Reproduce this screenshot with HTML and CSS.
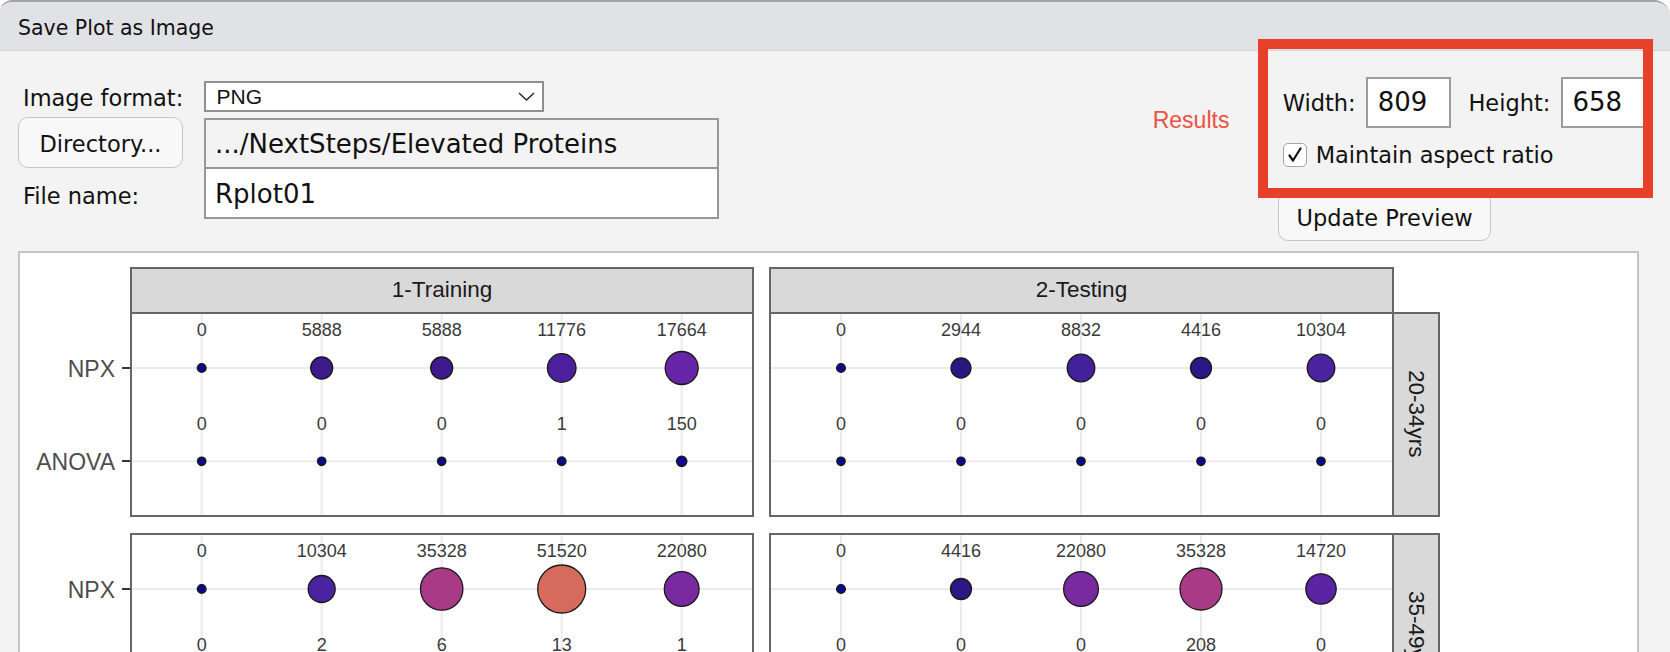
FILE: index.html
```html
<!DOCTYPE html>
<html>
<head>
<meta charset="utf-8">
<title>Save Plot as Image</title>
<link rel="stylesheet" href="styles.css">
</head>
<body>
<div class="window">
  <div class="titlebar">Save Plot as Image</div>
  <div class="content">
    <div class="top">
      <div class="form">
        <div class="frow r1">
          <div class="lab">Image format:</div>
          <div class="select">
            <span>PNG</span>
            <svg class="chev" width="17" height="9" viewBox="0 0 17 9"><polyline points="1,1 8.5,8 16,1" fill="none" stroke="#2a2a2a" stroke-width="1.5"/></svg>
          </div>
        </div>
        <div class="frow r2">
          <div class="lab"><button class="btn dir">Directory...</button></div>
          <div class="field path">.../NextSteps/Elevated Proteins</div>
        </div>
        <div class="frow r3">
          <div class="lab lab3">File name:</div>
          <div class="field fname">Rplot01</div>
        </div>
      </div>
      <div class="results">Results</div>
      <div class="size">
        <div class="dims">
          <span class="dlab">Width:</span>
          <div class="num">809</div>
          <span class="dlab hlab">Height:</span>
          <div class="num">658</div>
        </div>
        <div class="aspect">
          <span class="cb"><svg width="22" height="22" viewBox="0 0 22 22"><path d="M5.5 11.5 L9 16.5 L16.5 4.5" fill="none" stroke="#111" stroke-width="2.2" stroke-linecap="round" stroke-linejoin="round"/></svg></span>
          <span class="cblab">Maintain aspect ratio</span>
        </div>
        <button class="btn upd">Update Preview</button>
      </div>
    </div>
    <div class="plotframe">
      <div class="plot">
        <div class="strip c2r1">1-Training</div>
        <div class="strip c4r1">2-Testing</div>

        <div class="yaxis c1r2">
          <div class="ytick"><span class="ylab">NPX</span><span class="tick"></span></div>
          <div class="ytick"><span class="ylab">ANOVA</span><span class="tick"></span></div>
        </div>
        <div class="panel c2r2">
          <svg width="620" height="201" viewBox="2 2 620 201">
            <g stroke="#ebebeb" stroke-width="2">
              <line x1="71.7" y1="0" x2="71.7" y2="205"/><line x1="191.7" y1="0" x2="191.7" y2="205"/><line x1="311.7" y1="0" x2="311.7" y2="205"/><line x1="431.7" y1="0" x2="431.7" y2="205"/><line x1="551.7" y1="0" x2="551.7" y2="205"/>
              <line x1="0" y1="56" x2="624" y2="56"/><line x1="0" y1="149.3" x2="624" y2="149.3"/>
            </g>
            <g class="cnt" text-anchor="middle">
              <text x="71.7" y="24.3">0</text><text x="191.7" y="24.3">5888</text><text x="311.7" y="24.3">5888</text><text x="431.7" y="24.3">11776</text><text x="551.7" y="24.3">17664</text>
              <text x="71.7" y="118.3">0</text><text x="191.7" y="118.3">0</text><text x="311.7" y="118.3">0</text><text x="431.7" y="118.3">1</text><text x="551.7" y="118.3">150</text>
            </g>
            <g stroke="#1a1a1a" stroke-width="1.3">
              <circle cx="71.7" cy="56" r="4.4" fill="#0d0887"/><circle cx="191.7" cy="56" r="11" fill="#3d1a8e"/><circle cx="311.7" cy="56" r="11" fill="#3d1a8e"/><circle cx="431.7" cy="56" r="14.3" fill="#4c1f9c"/><circle cx="551.7" cy="56" r="16.5" fill="#6824a6"/>
              <circle cx="71.7" cy="149.3" r="4.2" fill="#0d0887"/><circle cx="191.7" cy="149.3" r="4.2" fill="#0d0887"/><circle cx="311.7" cy="149.3" r="4.2" fill="#0d0887"/><circle cx="431.7" cy="149.3" r="4.3" fill="#0d0887"/><circle cx="551.7" cy="149.3" r="5.2" fill="#120a8c"/>
            </g>
          </svg>
        </div>
        <div class="panel c4r2">
          <svg width="621" height="201" viewBox="2 2 621 201">
            <g stroke="#ebebeb" stroke-width="2">
              <line x1="72" y1="0" x2="72" y2="205"/><line x1="192" y1="0" x2="192" y2="205"/><line x1="312" y1="0" x2="312" y2="205"/><line x1="432" y1="0" x2="432" y2="205"/><line x1="552" y1="0" x2="552" y2="205"/>
              <line x1="0" y1="56" x2="625" y2="56"/><line x1="0" y1="149.3" x2="625" y2="149.3"/>
            </g>
            <g class="cnt" text-anchor="middle">
              <text x="72" y="24.3">0</text><text x="192" y="24.3">2944</text><text x="312" y="24.3">8832</text><text x="432" y="24.3">4416</text><text x="552" y="24.3">10304</text>
              <text x="72" y="118.3">0</text><text x="192" y="118.3">0</text><text x="312" y="118.3">0</text><text x="432" y="118.3">0</text><text x="552" y="118.3">0</text>
            </g>
            <g stroke="#1a1a1a" stroke-width="1.3">
              <circle cx="72" cy="56" r="4.4" fill="#0d0887"/><circle cx="192" cy="56" r="10" fill="#2b1683"/><circle cx="312" cy="56" r="13.8" fill="#44209a"/><circle cx="432" cy="56" r="10.5" fill="#2d1786"/><circle cx="552" cy="56" r="13.8" fill="#4b22a0"/>
              <circle cx="72" cy="149.3" r="4.2" fill="#0d0887"/><circle cx="192" cy="149.3" r="4.2" fill="#0d0887"/><circle cx="312" cy="149.3" r="4.2" fill="#0d0887"/><circle cx="432" cy="149.3" r="4.2" fill="#0d0887"/><circle cx="552" cy="149.3" r="4.2" fill="#0d0887"/>
            </g>
          </svg>
        </div>
        <div class="rstrip c5r2">20-34yrs</div>

        <div class="yaxis c1r4">
          <div class="ytick"><span class="ylab">NPX</span><span class="tick"></span></div>
          <div class="ytick"><span class="ylab">ANOVA</span><span class="tick"></span></div>
        </div>
        <div class="panel c2r4">
          <svg width="620" height="201" viewBox="2 2 620 201">
            <g stroke="#ebebeb" stroke-width="2">
              <line x1="71.7" y1="0" x2="71.7" y2="205"/><line x1="191.7" y1="0" x2="191.7" y2="205"/><line x1="311.7" y1="0" x2="311.7" y2="205"/><line x1="431.7" y1="0" x2="431.7" y2="205"/><line x1="551.7" y1="0" x2="551.7" y2="205"/>
              <line x1="0" y1="56" x2="624" y2="56"/><line x1="0" y1="149.3" x2="624" y2="149.3"/>
            </g>
            <g class="cnt" text-anchor="middle">
              <text x="71.7" y="24.3">0</text><text x="191.7" y="24.3">10304</text><text x="311.7" y="24.3">35328</text><text x="431.7" y="24.3">51520</text><text x="551.7" y="24.3">22080</text>
              <text x="71.7" y="118.3">0</text><text x="191.7" y="118.3">2</text><text x="311.7" y="118.3">6</text><text x="431.7" y="118.3">13</text><text x="551.7" y="118.3">1</text>
            </g>
            <g stroke="#1a1a1a" stroke-width="1.3">
              <circle cx="71.7" cy="56" r="4.4" fill="#0d0887"/><circle cx="191.7" cy="56" r="13.5" fill="#4b22a0"/><circle cx="311.7" cy="56" r="21.2" fill="#a83a86"/><circle cx="431.7" cy="56" r="24" fill="#d56a5d"/><circle cx="551.7" cy="56" r="17.4" fill="#7a2a9f"/>
              <circle cx="71.7" cy="149.3" r="4.2" fill="#0d0887"/><circle cx="191.7" cy="149.3" r="4.3" fill="#0d0887"/><circle cx="311.7" cy="149.3" r="4.4" fill="#0d0887"/><circle cx="431.7" cy="149.3" r="4.6" fill="#0d0887"/><circle cx="551.7" cy="149.3" r="4.3" fill="#0d0887"/>
            </g>
          </svg>
        </div>
        <div class="panel c4r4">
          <svg width="621" height="201" viewBox="2 2 621 201">
            <g stroke="#ebebeb" stroke-width="2">
              <line x1="72" y1="0" x2="72" y2="205"/><line x1="192" y1="0" x2="192" y2="205"/><line x1="312" y1="0" x2="312" y2="205"/><line x1="432" y1="0" x2="432" y2="205"/><line x1="552" y1="0" x2="552" y2="205"/>
              <line x1="0" y1="56" x2="625" y2="56"/><line x1="0" y1="149.3" x2="625" y2="149.3"/>
            </g>
            <g class="cnt" text-anchor="middle">
              <text x="72" y="24.3">0</text><text x="192" y="24.3">4416</text><text x="312" y="24.3">22080</text><text x="432" y="24.3">35328</text><text x="552" y="24.3">14720</text>
              <text x="72" y="118.3">0</text><text x="192" y="118.3">0</text><text x="312" y="118.3">0</text><text x="432" y="118.3">208</text><text x="552" y="118.3">0</text>
            </g>
            <g stroke="#1a1a1a" stroke-width="1.3">
              <circle cx="72" cy="56" r="4.4" fill="#0d0887"/><circle cx="192" cy="56" r="10.5" fill="#2d1786"/><circle cx="312" cy="56" r="17.4" fill="#7a2a9f"/><circle cx="432" cy="56" r="21" fill="#a83a86"/><circle cx="552" cy="56" r="15.2" fill="#5a24a2"/>
              <circle cx="72" cy="149.3" r="4.2" fill="#0d0887"/><circle cx="192" cy="149.3" r="4.2" fill="#0d0887"/><circle cx="312" cy="149.3" r="4.2" fill="#0d0887"/><circle cx="432" cy="149.3" r="5.4" fill="#130a8d"/><circle cx="552" cy="149.3" r="4.2" fill="#0d0887"/>
            </g>
          </svg>
        </div>
        <div class="rstrip c5r4">35-49yrs</div>
      </div>
    </div>
  </div>
  <div class="annot"></div>
</div>
</body>
</html>
```
FILE: styles.css
```css
* {
  box-sizing: border-box;
}

html,
body {
  margin: 0;
  padding: 0;
  width: 1670px;
  height: 652px;
  overflow: hidden;
  background: #ffffff;
}

body {
  font-family: "DejaVu Sans", sans-serif;
  color: #111111;
}

.window {
  position: relative;
  height: 652px;
  background: #f2f3f2;
  border-top: 2px solid #a3a3a6;
  border-radius: 12px 16px 0 0;
  overflow: hidden;
}

.titlebar {
  height: 49px;
  padding: 4px 0 0 18px;
  line-height: 44px;
  font-size: 20.5px;
  background: #e1e2e6;
  border-bottom: 1px solid #d4d5d8;
  color: #111;
}

.content {
  padding-left: 18px;
}

.top {
  display: flex;
  align-items: flex-start;
  height: 190px;
}

/* ---------- left form ---------- */
.form {
  flex-shrink: 0;
  width: 701px;
  margin-top: 30px;
  font-size: 22.5px;
}

.frow {
  display: flex;
}

.lab {
  flex-shrink: 0;
  width: 186px;
  padding-left: 5px;
  white-space: nowrap;
}

.r1 {
  height: 31px;
  margin-bottom: 6px;
}

.r1 .lab {
  line-height: 35px;
}

.r2 {
  height: 51px;
}

.r2 .lab {
  padding-left: 0;
}

.r3 {
  height: 50px;
}

.lab3 {
  line-height: 54px;
}

.select {
  width: 340px;
  height: 31px;
  border: 2px solid #8f8f8f;
  background: #ffffff;
  display: flex;
  align-items: center;
  justify-content: space-between;
  padding: 0 7px 0 10.5px;
  font-family: "Liberation Sans", Arial, sans-serif;
  font-size: 21px;
}

.chev {
  display: block;
}

.field {
  width: 515px;
  border: 2px solid #979797;
  font-size: 26px;
  padding-left: 9px;
  white-space: nowrap;
}

.path {
  height: 51px;
  background: #f2f3f2;
  padding-top: 4px;
  line-height: 41px;
}

.fname {
  height: 52px;
  margin-top: -2px;
  background: #ffffff;
  padding-top: 5px;
  line-height: 41px;
}

.btn {
  display: block;
  font-family: "DejaVu Sans", sans-serif;
  font-size: 22.5px;
  color: #111;
  background: #f8f8f8;
  border: 1.5px solid #c5c5c5;
  border-radius: 10px;
  padding: 3px 0 0 0;
  margin: 0;
  text-align: center;
}

.dir {
  width: 165px;
  height: 51px;
  margin-top: -1px;
}

/* ---------- results ---------- */
.results {
  flex-shrink: 0;
  width: 125.6px;
  margin-left: 433.7px;
  margin-top: 55.9px;
  font-family: "Liberation Sans", Arial, sans-serif;
  font-size: 23px;
  color: #ec5142;
}

/* ---------- size group ---------- */
.size {
  flex-shrink: 0;
  margin-top: 26px;
  display: flex;
  flex-direction: column;
  font-size: 22.5px;
}

.dims {
  display: flex;
  align-items: center;
  height: 51px;
  padding-left: 4.4px;
}

.dlab {
  white-space: nowrap;
}

.hlab {
  margin-left: 17.3px;
}

.num {
  width: 85px;
  height: 51px;
  margin-left: 10.5px;
  border: 2px solid #9b9b9b;
  background: #ffffff;
  font-size: 26px;
  line-height: 47px;
  padding-left: 9.6px;
}

.aspect {
  display: flex;
  align-items: center;
  height: 24px;
  margin-top: 15px;
  padding-left: 4.4px;
}

.cb {
  width: 24px;
  height: 24px;
  border: 1.5px solid #a5a5a5;
  border-radius: 5px;
  background: #ffffff;
  display: flex;
  align-items: center;
  justify-content: center;
}

.cblab {
  margin-left: 9px;
  white-space: nowrap;
}

.upd {
  width: 212.7px;
  height: 50px;
  margin-top: 24px;
}

/* ---------- annotation overlay ---------- */
.annot {
  position: absolute;
  left: 1258px;
  top: 37.3px;
  width: 395px;
  height: 159px;
  border: 10px solid #e8412b;
  z-index: 5;
}

/* ---------- plot ---------- */
.plotframe {
  width: 1621px;
  height: 520px;
  margin-top: 10px;
  border: 2px solid #c5c5c5;
  background: #ffffff;
}

.plot {
  display: grid;
  grid-template-columns: 110px 624px 15px 625px 46px;
  grid-template-rows: 45px 205px 16px 205px;
  padding-top: 13.7px;
  font-family: "Liberation Sans", Arial, sans-serif;
}

.c2r1 { grid-column: 2; grid-row: 1; }
.c4r1 { grid-column: 4; grid-row: 1; }
.c1r2 { grid-column: 1; grid-row: 2; }
.c2r2 { grid-column: 2; grid-row: 2; }
.c4r2 { grid-column: 4; grid-row: 2; }
.c5r2 { grid-column: 5; grid-row: 2; }
.c1r4 { grid-column: 1; grid-row: 4; }
.c2r4 { grid-column: 2; grid-row: 4; }
.c4r4 { grid-column: 4; grid-row: 4; }
.c5r4 { grid-column: 5; grid-row: 4; }

.strip {
  background: #d9d9d9;
  border: 2px solid #666666;
  border-bottom: none;
  display: flex;
  align-items: center;
  justify-content: center;
  font-size: 22.5px;
  color: #1a1a1a;
}

.rstrip {
  background: #d9d9d9;
  border: 2px solid #666666;
  border-left: none;
  writing-mode: vertical-rl;
  display: flex;
  align-items: center;
  justify-content: center;
  font-size: 22.5px;
  color: #1a1a1a;
}

.panel {
  border: 2px solid #666666;
  background: #ffffff;
  overflow: hidden;
}

.panel svg {
  display: block;
}

.cnt {
  font-family: "Liberation Sans", Arial, sans-serif;
  font-size: 18px;
  fill: #3a3a3a;
}

.yaxis {
  display: grid;
  grid-template-rows: 1fr 1fr;
  padding: 9.3px 0;
}

.ytick {
  display: flex;
  align-items: center;
  justify-content: flex-end;
}

.ylab {
  font-size: 23px;
  color: #4d4d4d;
  padding-top: 3px;
}

.tick {
  width: 8.3px;
  height: 2px;
  margin-left: 6.7px;
  background: #333333;
}
```
